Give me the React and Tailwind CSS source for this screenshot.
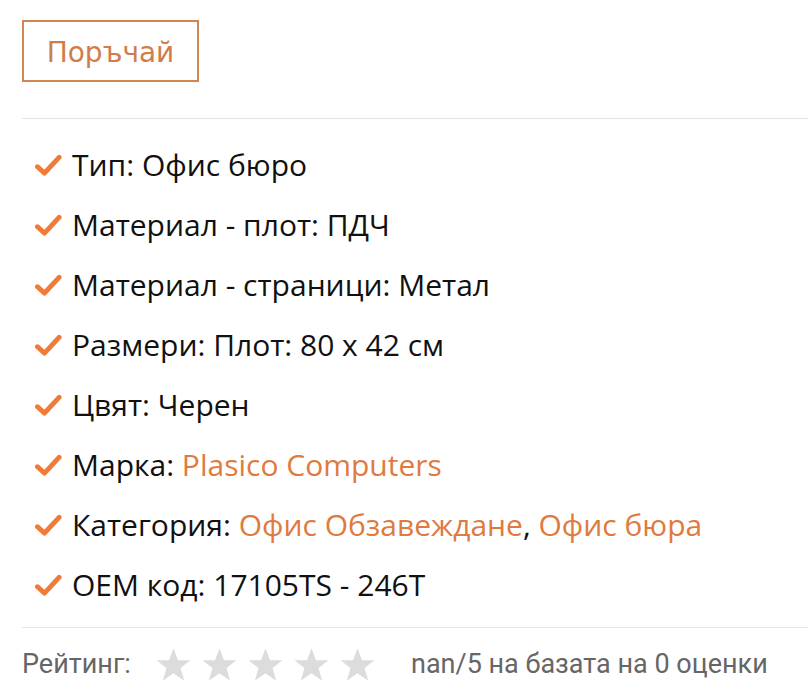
const specs = [
  { label: 'Тип:', value: 'Офис бюро' },
  { label: 'Материал - плот:', value: 'ПДЧ' },
  { label: 'Материал - страници:', value: 'Метал' },
  { label: 'Размери:', value: 'Плот: 80 x 42 см' },
  { label: 'Цвят:', value: 'Черен' },
  { label: 'Марка:', links: ['Plasico Computers'] },
  { label: 'Категория:', links: ['Офис Обзавеждане', 'Офис бюра'] },
  { label: 'OEM код:', value: '17105TS - 246T' },
];

function Tick() {
  return (
    <svg viewBox="0 0 24 24" className="w-[28px] h-[28px] shrink-0" fill="none">
      <path d="M3 13.5 L9 19 L21.5 5.5" stroke="#f07a3a" strokeWidth="4.2" strokeLinecap="round" strokeLinejoin="round" />
    </svg>
  );
}

function Star() {
  return (
    <svg viewBox="0 0 24 24" className="w-[37px] h-[37px]" fill="#dcdcdc">
      <path d="M12 1.5 L14.9 9.2 L23 9.3 L16.6 14.3 L18.9 22.5 L12 17.7 L5.1 22.5 L7.4 14.3 L1 9.3 L9.1 9.2 Z" />
    </svg>
  );
}

export default function App() {
  return (
    <div className="bg-white w-[808px] h-[699px] overflow-hidden pl-[22px] font-['Open_Sans',sans-serif]">
      <div className="pt-[20px] pb-[36px]">
        <button className="w-[177px] h-[62px] border-2 border-[#d08552] text-[#d07d4a] text-[28px] pt-[3px] font-['DejaVu_Sans',sans-serif]">
          Поръчай
        </button>
      </div>

      <div className="border-t border-[#e4e4e4]" />

      <ul className="pt-[16px] pb-[12px] flex flex-col">
        {specs.map((s) => (
          <li key={s.label} className="h-[60px] flex items-center gap-[10px] pl-[12px] text-[30px] text-[#111] leading-none">
            <Tick />
            <span>
              {s.label}{' '}
              {s.value && <span>{s.value}</span>}
              {s.links && s.links.map((l, i) => (
                <span key={l}>
                  {i > 0 && ', '}
                  <span className="text-[#e07a3e]">{l}</span>
                </span>
              ))}
            </span>
          </li>
        ))}
      </ul>

      <div className="border-t border-[#e4e4e4]" />

      <div className="flex items-center h-[72px] text-[27px] text-[#666] font-['Roboto',sans-serif]">
        <span className="w-[133px]">Рейтинг:</span>
        <div className="flex gap-[9px]">
          <Star /><Star /><Star /><Star /><Star />
        </div>
        <span className="ml-[35px]">nan/5 на базата на 0 оценки</span>
      </div>
    </div>
  );
}
